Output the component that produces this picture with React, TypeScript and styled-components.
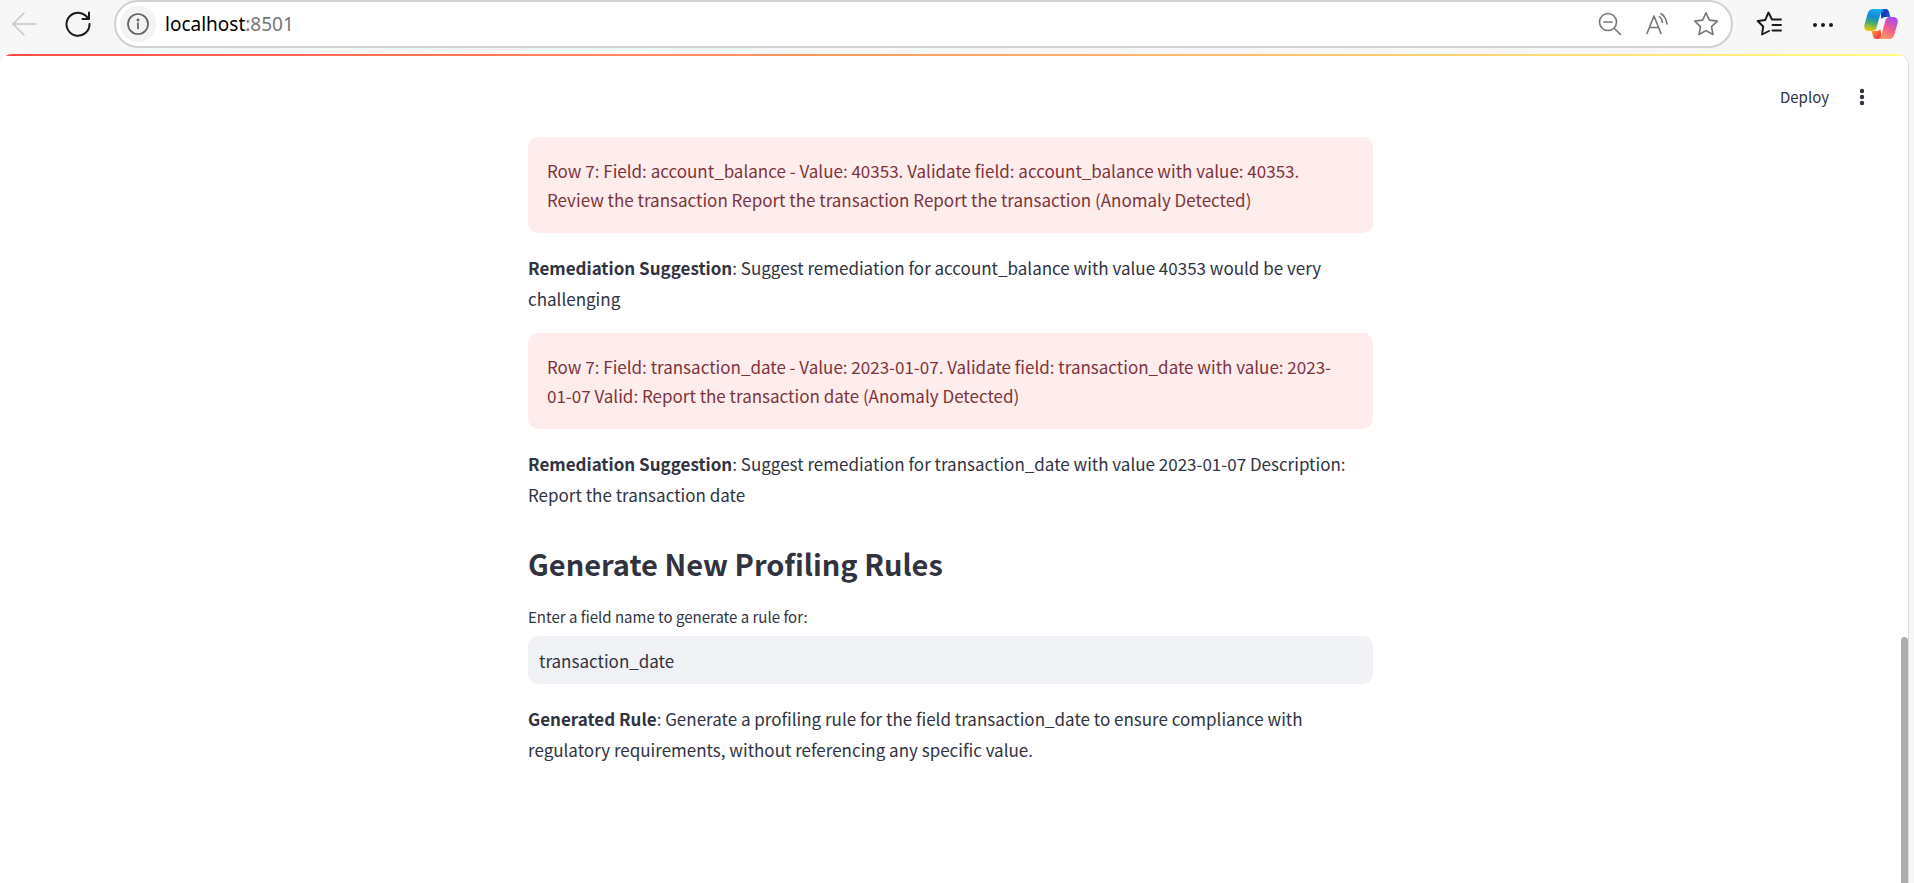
import React, { useState } from "react";
import styled, { createGlobalStyle } from "styled-components";

const GlobalStyle = createGlobalStyle`
  *, *::before, *::after { box-sizing: border-box; }
  body {
    margin: 0;
    background: #f7f7f7;
    color: #31333f;
    font-family: "Source Sans Pro", "Noto Sans CJK SC", "Open Sans", sans-serif;
    font-size: 17px;
  }
  button, input { font: inherit; color: inherit; }
`;

const Browser = styled.div`
  display: flex;
  flex-direction: column;
  min-height: 100vh;
`;

const Toolbar = styled.header`
  display: flex;
  align-items: center;
  height: 54px;
  padding: 0 16px 6px 11px;
`;

const ToolGroup = styled.div<{ $gap: number }>`
  display: flex;
  align-items: center;
  gap: ${(p) => p.$gap}px;
`;

const IconButton = styled.button<{ $color?: string }>`
  display: flex;
  align-items: center;
  justify-content: center;
  padding: 0;
  border: 0;
  background: none;
  color: ${(p) => p.$color ?? "#1b1b1b"};
  cursor: pointer;
`;

const AddressBar = styled.div`
  display: flex;
  flex: 1;
  align-items: center;
  height: 48px;
  margin: 0 23px;
  padding: 0 12px 0 4px;
  border: 2px solid #d1d1d1;
  border-radius: 24px;
  background: #fff;
`;

const SiteInfo = styled(IconButton)`
  width: 36px;
  height: 36px;
  border-radius: 50%;
  background: #f3f3f3;
`;

const Url = styled.div`
  flex: 1;
  margin-left: 9px;
  color: #767676;
  font-family: "Segoe UI", "Noto Sans", "Open Sans", sans-serif;
  font-size: 19px;
  line-height: 28px;
`;

const Host = styled.span`
  color: #000;
`;

const Viewport = styled.div`
  display: flex;
  flex: 1;
  margin-right: 5px;
  border-right: 1px solid #dcdcdc;
  border-radius: 12px 12px 0 0;
  background: #fff;
  overflow: hidden;
`;

const Page = styled.div`
  flex: 1;
  min-width: 0;
  margin-right: -7px;
`;

const Decoration = styled.div`
  height: 2px;
  background: linear-gradient(90deg, #ff4b4b, #fffd80);
`;

const AppHeader = styled.header`
  display: flex;
  align-items: center;
  justify-content: flex-end;
  gap: 20px;
  height: 81px;
  padding-right: 33px;
`;

const DeployButton = styled.button`
  padding: 0;
  border: 0;
  background: none;
  font-size: 15px;
  line-height: 24px;
  cursor: pointer;
`;

const ContentArea = styled.div`
  padding-right: 7px;
`;

const Content = styled.main`
  display: flex;
  flex-direction: column;
  gap: 19px;
  max-width: 845px;
  margin: 0 auto;
  padding-bottom: 96px;
`;

const Alert = styled.div`
  padding: 19px;
  border-radius: 10px;
  background: #ffecec;
  color: #7d353b;
  line-height: 29px;
`;

const Paragraph = styled.p`
  margin: 0;
  line-height: 31px;
`;

const Strong = styled.strong`
  font-weight: 600;
`;

const Heading = styled.h2`
  margin: 0;
  padding: 13px 0 0;
  font-size: 29px;
  font-weight: 600;
  line-height: 42px;
`;

const Field = styled.div`
  display: flex;
  flex-direction: column;
  gap: 5px;
`;

const Label = styled.label`
  font-size: 15px;
  line-height: 28px;
`;

const TextInput = styled.input`
  width: 100%;
  height: 48px;
  padding: 0 11px;
  border: 0;
  border-radius: 10px;
  outline: 0;
  background: #f0f2f6;
`;

const ScrollTrack = styled.div`
  display: flex;
  flex-direction: column;
  width: 7px;
`;

const ScrollSpace = styled.div`
  flex: 583;
`;

const ScrollThumb = styled.div`
  flex: 246;
  border-radius: 4px 4px 0 0;
  background: #adacb1;
`;

const Line = (p: { width?: number; children: React.ReactNode }) => (
  <svg
    width={26}
    height={26}
    viewBox="0 0 26 26"
    fill="none"
    stroke="currentColor"
    strokeWidth={p.width ?? 1.6}
    strokeLinecap="round"
    strokeLinejoin="round"
    aria-hidden="true"
  >
    {p.children}
  </svg>
);

const CopilotLogo = () => (
  <svg width="34" height="32" viewBox="0 0 34 32" aria-hidden="true">
    <defs>
      <linearGradient id="cpA" x1="0.5" y1="0" x2="0.3" y2="1">
        <stop offset="0" stopColor="#18aef0" />
        <stop offset="0.35" stopColor="#1488d8" />
        <stop offset="0.65" stopColor="#4caf6a" />
        <stop offset="1" stopColor="#f5c800" />
      </linearGradient>
      <linearGradient id="cpB" x1="0" y1="0" x2="1" y2="0.6">
        <stop offset="0" stopColor="#1c8be8" />
        <stop offset="0.5" stopColor="#0b35b8" />
        <stop offset="1" stopColor="#1f63e0" />
      </linearGradient>
      <linearGradient id="cpC" x1="0.7" y1="0" x2="0.3" y2="1">
        <stop offset="0" stopColor="#a44cf0" />
        <stop offset="0.5" stopColor="#ee5a90" />
        <stop offset="1" stopColor="#ff9a60" />
      </linearGradient>
      <linearGradient id="cpD" x1="0" y1="0" x2="1" y2="1">
        <stop offset="0" stopColor="#ffb030" />
        <stop offset="0.6" stopColor="#f4553c" />
        <stop offset="1" stopColor="#d83a50" />
      </linearGradient>
    </defs>
    <path d="M16 1h5.500c2 0 3 1.200 3.500 3l1.500 5h-4c-2 0-3.500.3-5 2z" fill="url(#cpB)" />
    <path d="M18 31h-5.500c-2 0-3-1.200-3.500-3l-1.500-5h4c2 0 3.500-.3 5-2z" fill="url(#cpD)" />
    <path d="M9 1h11c-2 .5-2.700 2-3.300 4l-4 14c-.8 2.700-2 4-4.700 4H5c-4 0-5.500-2.500-4.500-6.500l3-10.500C4.500 2.700 6 1 9 1z" fill="url(#cpA)" />
    <path d="M25 31H14c2-.5 2.700-2 3.300-4l4-14c.8-2.700 2-4 4.700-4h3c4 0 5.500 2.500 4.500 6.500l-3 10.500c-1 3.300-2.500 5-5.500 5z" fill="url(#cpC)" />
  </svg>
);

const alertOne =
  "Row 7: Field: account_balance - Value: 40353. Validate field: account_balance with value: 40353. Review the transaction Report the transaction Report the transaction (Anomaly Detected)";
const alertTwo =
  "Row 7: Field: transaction_date - Value: 2023-01-07. Validate field: transaction_date with value: 2023-01-07 Valid: Report the transaction date (Anomaly Detected)";

export default function App() {
  const [field, setField] = useState("transaction_date");

  return (
    <Browser>
      <GlobalStyle />
      <Toolbar>
        <ToolGroup $gap={28}>
          <IconButton $color="#c8c8c8" aria-label="Back" disabled>
            <Line>
              <path d="M25 13H2M13 2 2 13l11 11" />
            </Line>
          </IconButton>
          <IconButton aria-label="Refresh">
            <Line width={2}>
              <path d="M24.500 13A11.500 11.500 0 1 1 20.500 4.500L23.500 7.500M24 1.500v6.500h-6.500" />
            </Line>
          </IconButton>
        </ToolGroup>
        <AddressBar>
          <SiteInfo $color="#606060" aria-label="Site information">
            <Line width={1.7}>
              <circle cx="13" cy="13" r="10" />
              <path d="M13 12v5.500" />
              <circle cx="13" cy="9" r="0.600" fill="currentColor" />
            </Line>
          </SiteInfo>
          <Url>
            <Host>localhost</Host>:8501
          </Url>
          <ToolGroup $gap={22}>
            <IconButton $color="#767676" aria-label="Zoom out">
              <Line>
                <circle cx="11" cy="11" r="8.500" />
                <path d="M17.200 17.200 23.500 23.500M7 11h8" />
              </Line>
            </IconButton>
            <IconButton $color="#767676" aria-label="Read aloud">
              <Line>
                <path d="M2 22.500 9 5l7 17.500M4.500 16.500h9M14.500 5.500c1.800 1.500 2.800 3.500 3 6M16 2.500c3.500 2.500 5.500 6 6 10.500" />
              </Line>
            </IconButton>
            <IconButton $color="#767676" aria-label="Add to favorites">
              <Line>
                <path d="m13 1.800 3.400 7.300 7.900 1-5.800 5.500 1.500 7.900-7-3.900-7 3.900 1.500-7.900-5.800-5.500 7.900-1z" />
              </Line>
            </IconButton>
          </ToolGroup>
        </AddressBar>
        <ToolGroup $gap={28}>
          <IconButton aria-label="Favorites">
            <Line width={1.9}>
              <path d="M16 8.500 12.500 1.500 9.200 9 1.700 10l5.500 5.500L6 23.500l7-3.500M16.500 8.500H25M16.500 14H25M16.500 19.500H25" />
            </Line>
          </IconButton>
          <IconButton aria-label="Settings and more">
            <Line>
              <g fill="currentColor" stroke="none">
                <circle cx="5" cy="14" r="2" />
                <circle cx="13" cy="14" r="2" />
                <circle cx="21" cy="14" r="2" />
              </g>
            </Line>
          </IconButton>
          <IconButton aria-label="Copilot">
            <CopilotLogo />
          </IconButton>
        </ToolGroup>
      </Toolbar>
      <Viewport>
        <Page>
          <Decoration />
          <AppHeader>
            <DeployButton>Deploy</DeployButton>
            <IconButton $color="#31333f" aria-label="Main menu">
              <Line>
                <g fill="currentColor" stroke="none">
                  <circle cx="13" cy="7" r="2.200" />
                  <circle cx="13" cy="13" r="2.200" />
                  <circle cx="13" cy="19" r="2.200" />
                </g>
              </Line>
            </IconButton>
          </AppHeader>
          <ContentArea>
            <Content>
              <Alert role="alert">{alertOne}</Alert>
              <Paragraph>
                <Strong>Remediation Suggestion</Strong>: Suggest remediation for account_balance with
                value 40353 would be very challenging
              </Paragraph>
              <Alert role="alert">{alertTwo}</Alert>
              <Paragraph>
                <Strong>Remediation Suggestion</Strong>: Suggest remediation for transaction_date with
                value 2023-01-07 Description: Report the transaction date
              </Paragraph>
              <Heading>Generate New Profiling Rules</Heading>
              <Field>
                <Label htmlFor="field-name">Enter a field name to generate a rule for:</Label>
                <TextInput
                  id="field-name"
                  type="text"
                  value={field}
                  onChange={(e) => setField(e.target.value)}
                />
              </Field>
              <Paragraph>
                <Strong>Generated Rule</Strong>: Generate a profiling rule for the field
                transaction_date to ensure compliance with regulatory requirements, without
                referencing any specific value.
              </Paragraph>
            </Content>
          </ContentArea>
        </Page>
        <ScrollTrack>
          <ScrollSpace />
          <ScrollThumb />
        </ScrollTrack>
      </Viewport>
    </Browser>
  );
}
